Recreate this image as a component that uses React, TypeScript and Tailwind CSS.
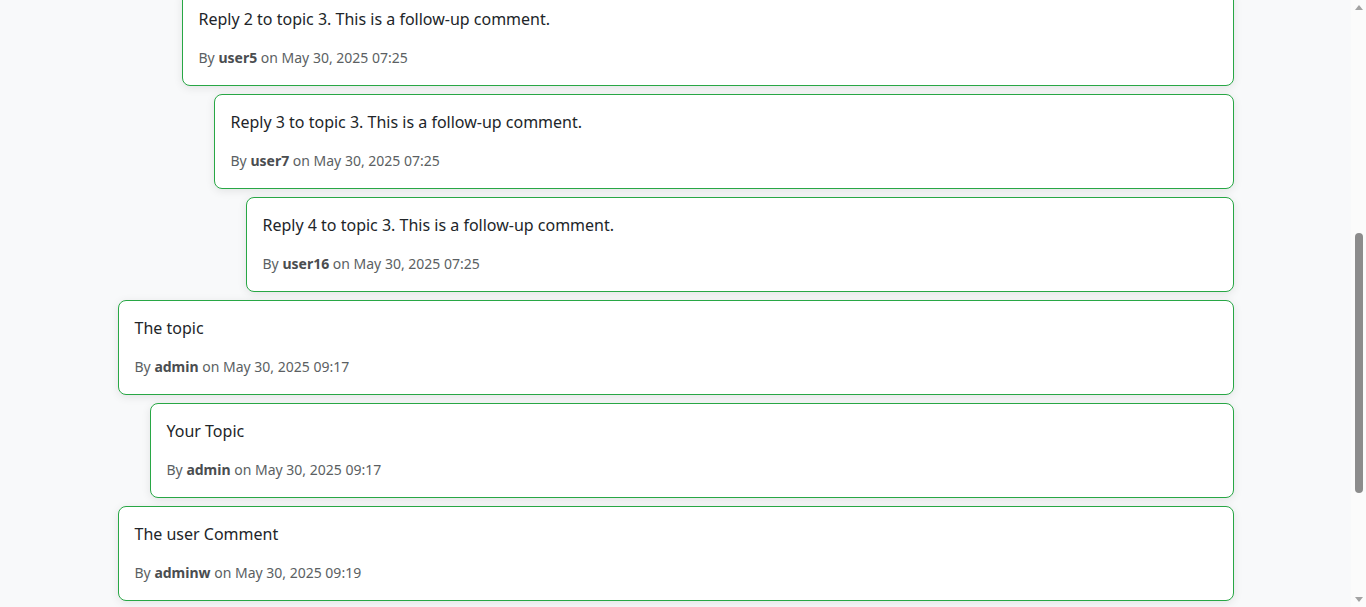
import React, { useLayoutEffect, useRef } from "react";

type C = { text: string; user: string; date: string; level: number };

const comments: C[] = [
  { text: "This is the first comment on topic 3.", user: "user2", date: "May 30, 2025 07:25", level: 0 },
  { text: "Reply 1 to topic 3. This is a follow-up comment.", user: "user9", date: "May 30, 2025 07:25", level: 1 },
  { text: "Reply 2 to topic 3. This is a follow-up comment.", user: "user5", date: "May 30, 2025 07:25", level: 2 },
  { text: "Reply 3 to topic 3. This is a follow-up comment.", user: "user7", date: "May 30, 2025 07:25", level: 3 },
  { text: "Reply 4 to topic 3. This is a follow-up comment.", user: "user16", date: "May 30, 2025 07:25", level: 4 },
  { text: "The topic", user: "admin", date: "May 30, 2025 09:17", level: 0 },
  { text: "Your Topic", user: "admin", date: "May 30, 2025 09:17", level: 1 },
  { text: "The user Comment", user: "adminw", date: "May 30, 2025 09:19", level: 0 },
];

const indent = ["ml-0", "ml-8", "ml-16", "ml-24", "ml-32"];

function Card({ c, anchor }: { c: C; anchor?: React.Ref<HTMLDivElement> }) {
  return (
    <div
      ref={anchor}
      className={`${indent[c.level]} mb-2 rounded-lg border border-[#28a745] bg-white px-4 pt-[15px] pb-[17px] shadow-[0_2px_10px_rgba(0,0,0,0.09)]`}
    >
      <p className="mb-4 text-base leading-6 text-[#212529]">{c.text}</p>
      <p className="text-sm leading-[21px] text-[#5b5f63]">
        By <span className="font-bold text-[#4a4d50]">{c.user}</span> on {c.date}
      </p>
    </div>
  );
}

function Scrollbar() {
  return (
    <div className="flex h-full w-[15px] shrink-0 flex-col bg-[#fbfbfb]">
      <div className="flex h-[15px] items-center justify-center">
        <svg width="8" height="5" viewBox="0 0 8 5">
          <polygon points="4,0 8,5 0,5" fill="#a3a3a3" />
        </svg>
      </div>
      <div className="flex-1">
        <div className="mx-auto w-[8px] rounded-full bg-[#8c8c8c]" style={{ marginTop: 218, height: 260 }} />
      </div>
      <div className="flex h-[15px] items-center justify-center">
        <svg width="8" height="5" viewBox="0 0 8 5">
          <polygon points="0,0 8,0 4,5" fill="#a3a3a3" />
        </svg>
      </div>
    </div>
  );
}

export default function App() {
  const mainRef = useRef<HTMLDivElement>(null);
  const anchorRef = useRef<HTMLDivElement>(null);
  useLayoutEffect(() => {
    if (mainRef.current && anchorRef.current) {
      const m = mainRef.current;
      const a = anchorRef.current;
      m.scrollTop = a.getBoundingClientRect().top - m.getBoundingClientRect().top + m.scrollTop + 9;
    }
  }, []);
  return (
    <div
      className="flex h-screen bg-[#f8f9fa]"
      style={{ fontFamily: '"Noto Sans", "Open Sans", sans-serif' }}
    >
      <div ref={mainRef} className="min-w-0 flex-1 overflow-hidden">
        <div className="mx-auto max-w-[1140px] px-3">
          <div className="pt-12">
            <h1 className="mb-2 text-[32px] font-semibold leading-10 text-[#212529]">Topic 3</h1>
            <p className="mb-6 text-sm leading-5 text-[#5b5f63]">
              Started by <span className="font-bold">user3</span> on May 30, 2025 07:25
            </p>
            <p className="mb-8 text-base leading-6 text-[#212529]">This is the content of topic 3.</p>
            <h2 className="mb-4 text-2xl font-semibold leading-8 text-[#212529]">Comments</h2>
          </div>
          <div>
            {comments.map((c, i) => (
              <Card key={i} c={c} anchor={i === 2 ? anchorRef : undefined} />
            ))}
          </div>
          <div className="mt-4 pb-6">
            <h3 className="mb-3 text-xl font-semibold leading-7 text-[#212529]">Leave a comment</h3>
            <textarea className="h-[100px] w-full rounded-lg border border-[#ced4da] bg-white p-3 text-base" />
            <button className="mt-3 h-10 rounded-lg bg-[#28a745] px-4 text-sm font-semibold text-white">
              Post comment
            </button>
          </div>
        </div>
      </div>
      <Scrollbar />
    </div>
  );
}
